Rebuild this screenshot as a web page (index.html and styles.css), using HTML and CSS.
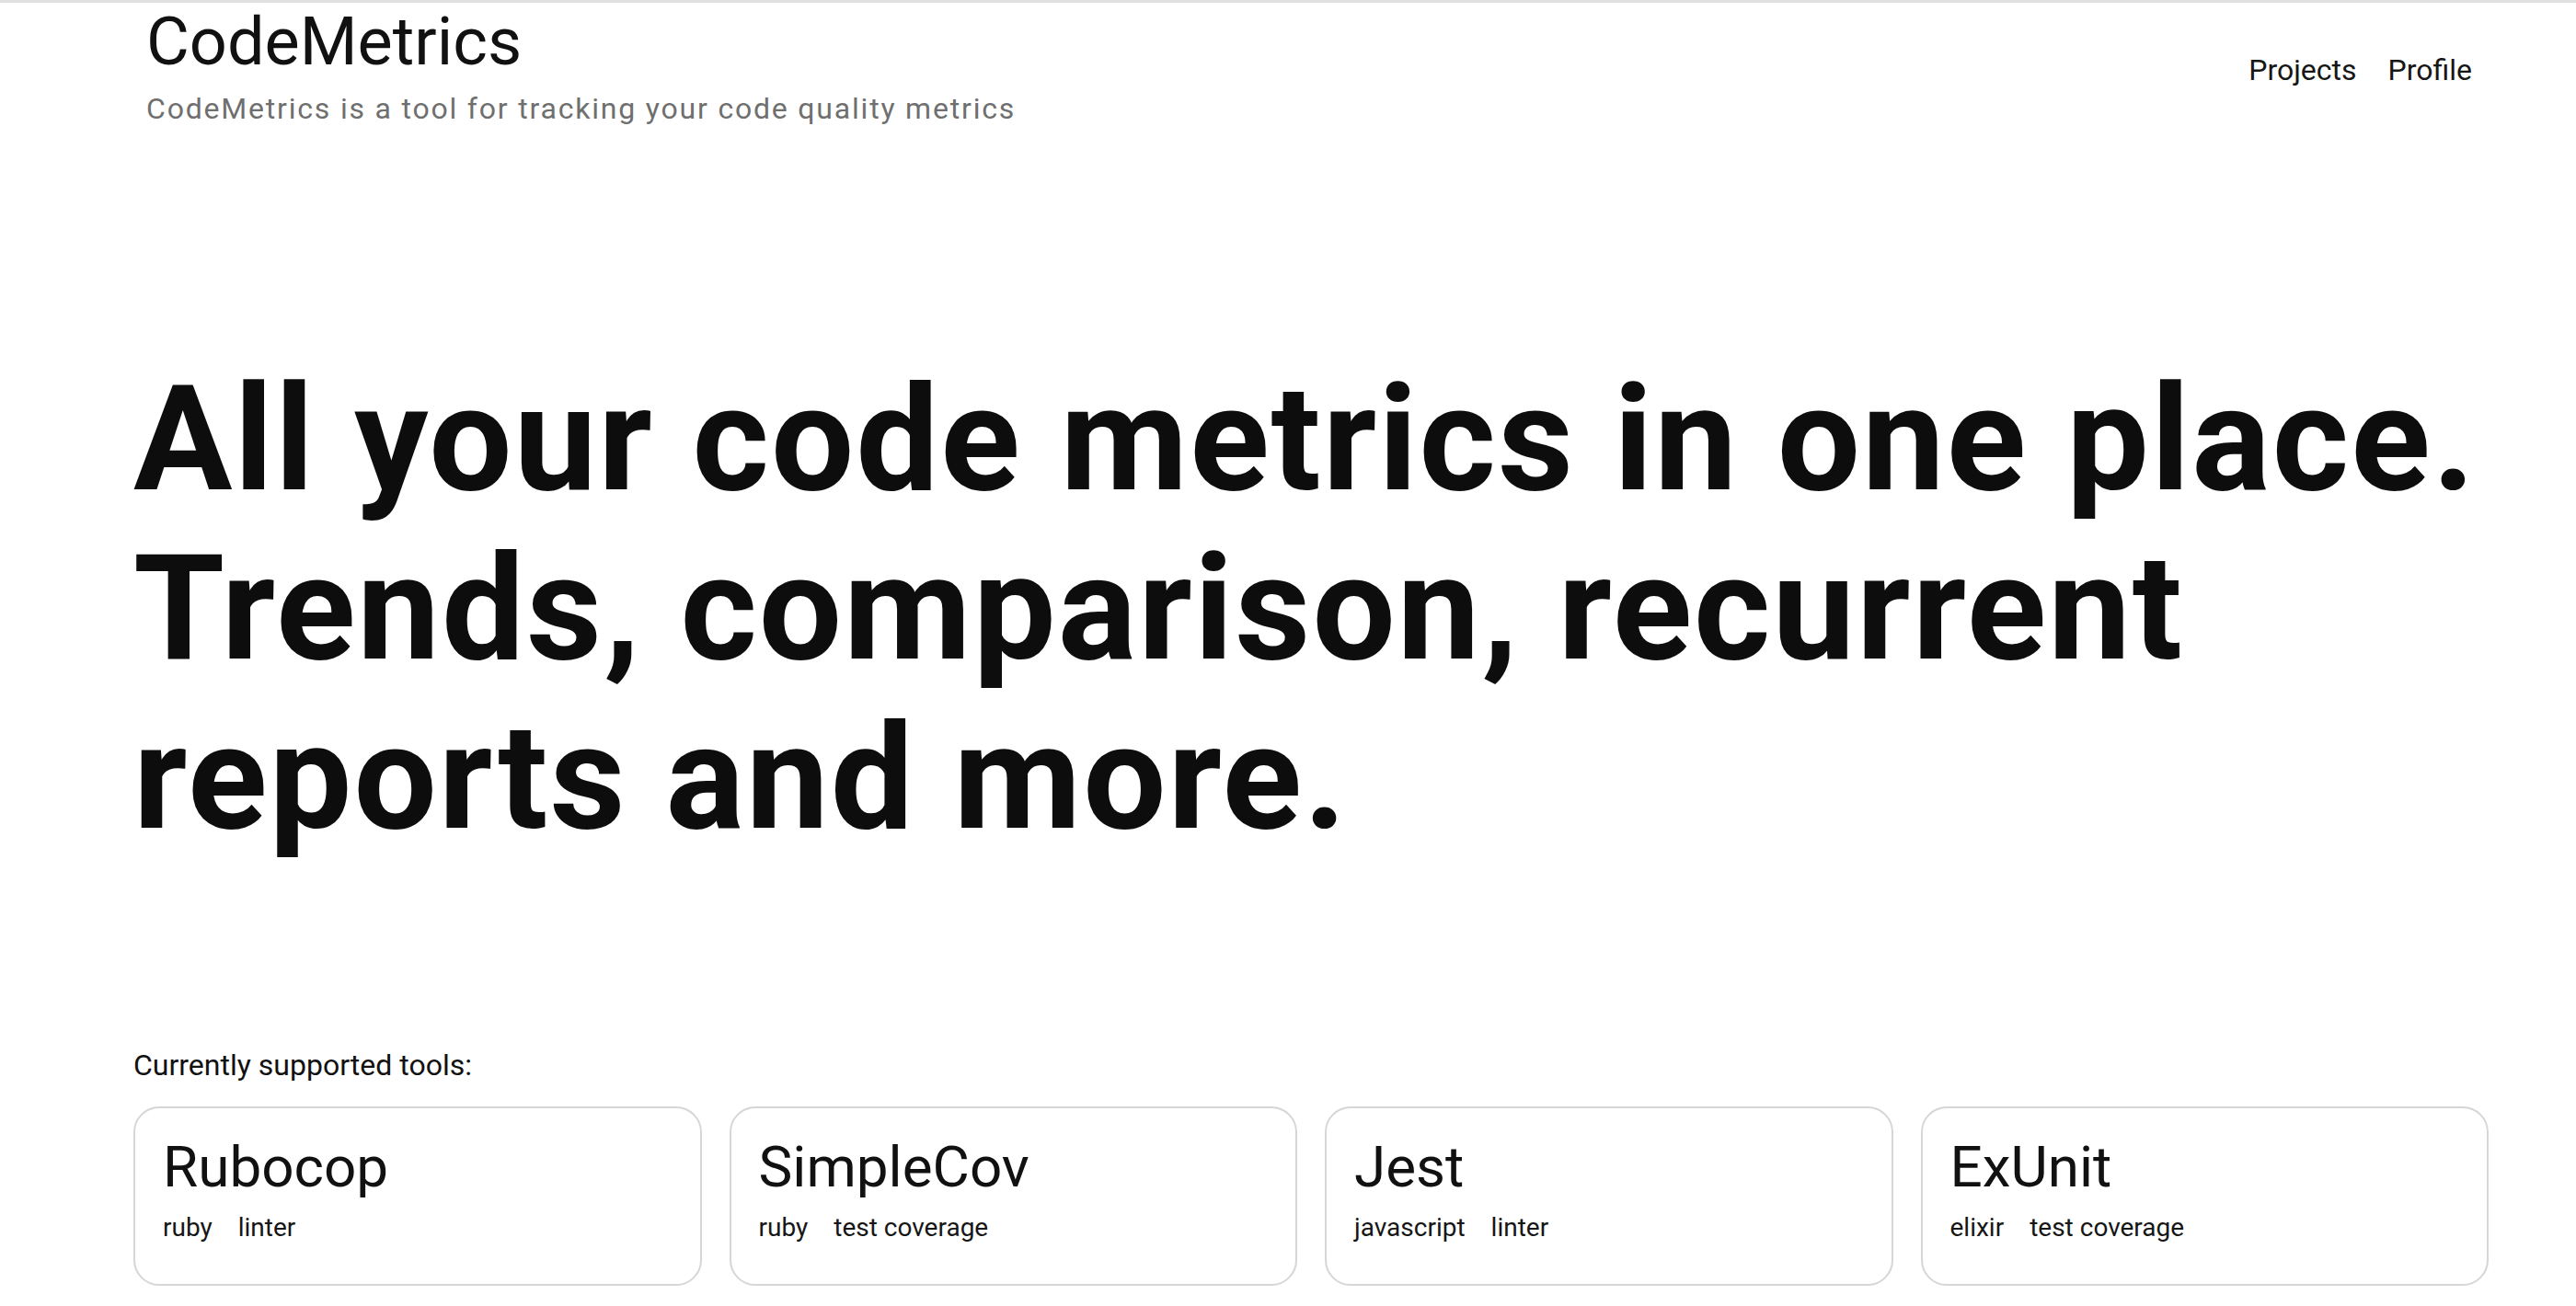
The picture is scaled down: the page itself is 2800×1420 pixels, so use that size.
FILE: index.html
```html
<!DOCTYPE html>
<html lang="en">
<head>
<meta charset="utf-8">
<title>CodeMetrics</title>
<link rel="stylesheet" href="styles.css">
</head>
<body>
<header class="site-header">
  <div class="brand">
    <div class="brand-name">CodeMetrics</div>
    <div class="brand-tagline">CodeMetrics is a tool for tracking your code quality metrics</div>
  </div>
  <nav class="nav">
    <a class="nav-link" href="#">Projects</a>
    <a class="nav-link" href="#">Profile</a>
  </nav>
</header>
<main class="main">
  <h1 class="hero">All your code metrics in one place. Trends, comparison, recurrent reports and more.</h1>
  <p class="tools-label">Currently supported tools:</p>
  <div class="tools">
    <div class="tool-card">
      <div class="tool-name">Rubocop</div>
      <div class="tags"><span>ruby</span><span>linter</span></div>
    </div>
    <div class="tool-card">
      <div class="tool-name">SimpleCov</div>
      <div class="tags"><span>ruby</span><span>test coverage</span></div>
    </div>
    <div class="tool-card">
      <div class="tool-name">Jest</div>
      <div class="tags"><span>javascript</span><span>linter</span></div>
    </div>
    <div class="tool-card">
      <div class="tool-name">ExUnit</div>
      <div class="tags"><span>elixir</span><span>test coverage</span></div>
    </div>
  </div>
</main>
</body>
</html>
```
FILE: styles.css
```css
* { box-sizing: border-box; }

html, body {
  margin: 0;
  padding: 0;
  background: #ffffff;
}

body {
  border-top: 3px solid #e0e0e0;
  font-family: Roboto, "Liberation Sans", sans-serif;
  color: #111111;
}

.site-header {
  display: flex;
  justify-content: space-between;
  align-items: center;
  padding: 3px 113px 0 159px;
}

.brand-name {
  font-size: 72px;
  line-height: 80px;
  font-weight: 400;
  color: #111111;
}

.brand-tagline {
  margin-top: 12px;
  font-size: 32px;
  line-height: 40px;
  letter-spacing: 1.8px;
  color: #6f6f6f;
}

.nav {
  display: flex;
  gap: 34px;
  margin-top: 8px;
}

.nav-link {
  font-size: 32px;
  line-height: 40px;
  color: #161616;
  text-decoration: none;
}

.main {
  margin-left: 145px;
  width: 2560px;
}

.hero {
  margin: 248px 0 0 0;
  font-size: 160px;
  line-height: 184px;
  font-weight: 700;
  letter-spacing: 2px;
  color: #0d0d0d;
  max-width: 2560px;
}

.tools-label {
  margin: 200px 0 0 0;
  font-size: 32px;
  line-height: 40px;
}

.tools {
  margin-top: 25px;
  display: grid;
  grid-template-columns: repeat(4, 1fr);
  gap: 30px;
}

.tool-card {
  border: 2px solid #d6d6d6;
  border-radius: 28px;
  padding: 27px 32px 42px 30px;
  height: 195px;
}

.tool-name {
  font-size: 62px;
  line-height: 74px;
  color: #111111;
}

.tags {
  margin-top: 11px;
  display: flex;
  gap: 28px;
  font-size: 28px;
  line-height: 36px;
  color: #161616;
}
```
